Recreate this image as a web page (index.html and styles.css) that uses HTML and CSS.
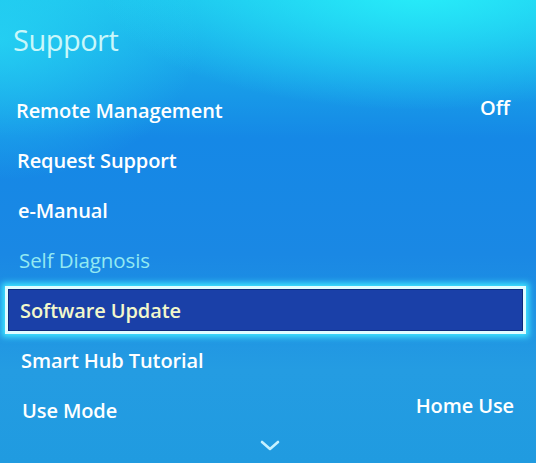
FILE: index.html
```html
<!DOCTYPE html>
<html>
<head>
<meta charset="utf-8">
<link rel="stylesheet" href="styles.css">
</head>
<body>
<div class="screen">
  <h1 class="title">Support</h1>
  <ul class="menu">
    <li class="row"><span class="label">Remote Management</span><span class="value">Off</span></li>
    <li class="row"><span class="label">Request Support</span></li>
    <li class="row"><span class="label">e-Manual</span></li>
    <li class="row row-dim"><span class="label">Self Diagnosis</span></li>
    <li class="row row-selected"><span class="label">Software Update</span></li>
    <li class="row"><span class="label">Smart Hub Tutorial</span></li>
    <li class="row"><span class="label">Use Mode</span><span class="value">Home Use</span></li>
  </ul>
  <div class="more">
    <svg width="20" height="12" viewBox="0 0 20 12"><path d="M2 2 L10 9 L18 2" fill="none" stroke="#c6f1ff" stroke-width="2.6" stroke-linecap="round" stroke-linejoin="round"/></svg>
  </div>
</div>
</body>
</html>
```
FILE: styles.css
```css
html, body {
  margin: 0;
  padding: 0;
}
body {
  width: 536px;
  height: 463px;
  overflow: hidden;
  font-family: "Open Sans", "Noto Sans", sans-serif;
}
.screen {
  width: 536px;
  height: 463px;
  box-sizing: border-box;
  padding-top: 22px;
  background:
    radial-gradient(ellipse 320px 120px at 420px -10px, rgba(40, 240, 250, 0.95), rgba(40, 240, 250, 0) 100%),
    radial-gradient(ellipse 200px 140px at 0px 40px, rgba(40, 220, 245, 0.7), rgba(40, 220, 245, 0) 100%),
    linear-gradient(180deg, #1cbdec 0%, #1588e6 30%, #1a88e4 55%, #249ce2 80%, #209be0 100%);
}
.title {
  margin: 0 0 0 13px;
  font-size: 29px;
  font-weight: 400;
  line-height: 36px;
  color: #c9f7fa;
  letter-spacing: -0.5px;
}
.menu {
  list-style: none;
  margin: 27px 0 0 0;
  padding: 0;
}
.row {
  height: 50px;
  display: flex;
  align-items: center;
  justify-content: space-between;
  padding: 0 24px 0 16px;
  color: #ffffff;
  font-size: 20px;
  font-weight: 600;
  letter-spacing: -0.1px;
}
.row:nth-child(2) { padding-left: 17px; }
.row:nth-child(3) { padding-left: 18px; }
.row-dim {
  color: #93e9f2;
  font-weight: 400;
  font-size: 20.5px;
  padding-left: 19px;
}
.row-selected {
  height: 40px;
  margin: 4px 13px 4px 8px;
  padding-left: 11px;
  background: #1a40a8;
  border: 1px solid #0d2a7a;
  box-shadow: 0 0 0 3px #dffcff, 0 0 6px 6px #40e6ff;
  color: #f2f8cc;
}
.row:nth-child(6) { padding-left: 21px; }
.row:nth-child(7) { padding-left: 22px; padding-right: 22px; }
.row:nth-child(7) .value { margin-top: -10px; }
.row:nth-child(1) .value { margin-top: -6px; padding-right: 2px; }
.more {
  display: flex;
  justify-content: center;
  padding-left: 4px;
  margin-top: 5px;
}
```
